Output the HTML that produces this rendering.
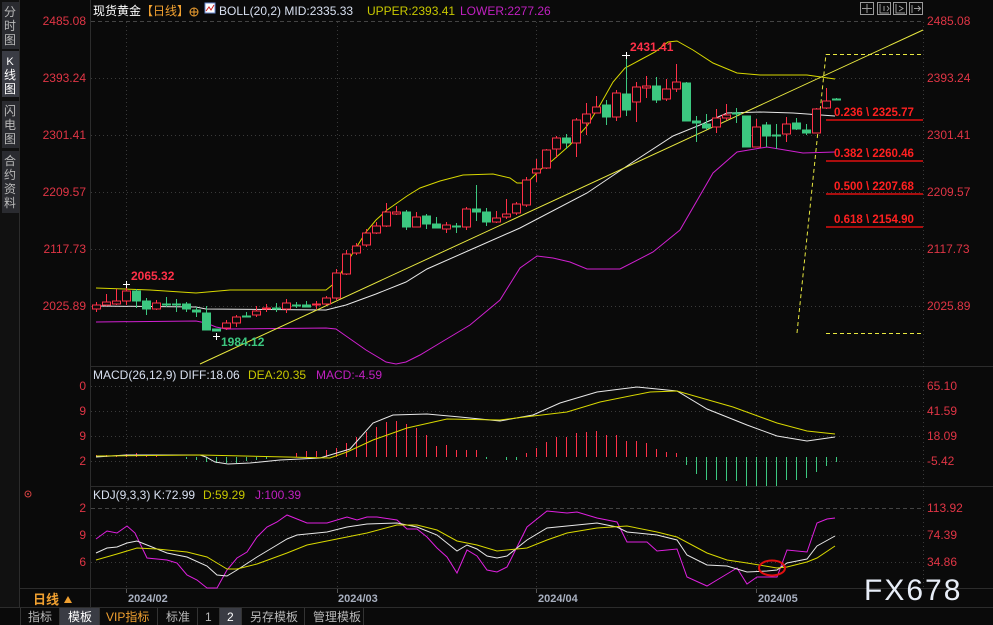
<!DOCTYPE html>
<html><head><meta charset="utf-8"><style>
html,body{margin:0;padding:0;background:#0a0a0a;width:993px;height:625px;overflow:hidden}
svg{display:block}
text{font-family:"Liberation Sans","Noto Sans CJK SC",sans-serif}
</style></head><body>
<svg width="993" height="625" viewBox="0 0 993 625" xmlns="http://www.w3.org/2000/svg">
<rect width="993" height="625" fill="#0a0a0a"/>
<!-- sidebar -->
<rect x="0" y="0" width="19" height="607" fill="#111"/>
<rect x="2" y="2" width="17" height="47" fill="#2a2b30"/>
<rect x="2" y="51" width="17" height="46" fill="#3a3c44"/>
<rect x="2" y="101" width="17" height="47" fill="#2a2b30"/>
<rect x="2" y="151" width="17" height="62" fill="#2a2b30"/>
<g font-size="12" fill="#b8b8b8" text-anchor="middle">
<text x="10" y="16">分</text><text x="10" y="30">时</text><text x="10" y="44">图</text>
<text x="10" y="65" fill="#fff" font-size="11">K</text><text x="10" y="79" fill="#fff">线</text><text x="10" y="93" fill="#fff">图</text>
<text x="10" y="115">闪</text><text x="10" y="129">电</text><text x="10" y="143">图</text>
<text x="10" y="165">合</text><text x="10" y="179">约</text><text x="10" y="193">资</text><text x="10" y="207">料</text>
</g>
<!-- frame lines -->
<g stroke="#2c2c2c" stroke-width="1">
<line x1="19.5" y1="0" x2="19.5" y2="607"/>
<line x1="90.5" y1="0" x2="90.5" y2="607"/>
<line x1="90" y1="366.5" x2="993" y2="366.5"/>
<line x1="90" y1="486.5" x2="993" y2="486.5"/>
<line x1="19" y1="588.5" x2="993" y2="588.5"/>
<line x1="0" y1="607.5" x2="993" y2="607.5"/>
</g>
<!-- grid -->
<g stroke="#3a3a3a" stroke-dasharray="1,3">
<line x1="91" y1="78.5" x2="923" y2="78.5"/><line x1="91" y1="135.5" x2="923" y2="135.5"/>
<line x1="91" y1="192.5" x2="923" y2="192.5"/><line x1="91" y1="249.5" x2="923" y2="249.5"/>
<line x1="91" y1="306.5" x2="923" y2="306.5"/>
<line x1="91" y1="386.5" x2="923" y2="386.5"/><line x1="91" y1="411.5" x2="923" y2="411.5"/>
<line x1="91" y1="436.5" x2="923" y2="436.5"/><line x1="91" y1="461.5" x2="923" y2="461.5"/>
<line x1="91" y1="535.5" x2="923" y2="535.5"/><line x1="91" y1="562.5" x2="923" y2="562.5"/>
<line x1="126.5" y1="22" x2="126.5" y2="588"/><line x1="337.5" y1="22" x2="337.5" y2="588"/>
<line x1="536.5" y1="22" x2="536.5" y2="588"/><line x1="756.5" y1="22" x2="756.5" y2="588"/>
<line x1="923.5" y1="22" x2="923.5" y2="588"/>
</g>
<g stroke="#444" stroke-dasharray="4,3">
<line x1="91" y1="21.5" x2="923" y2="21.5"/><line x1="91" y1="508.5" x2="923" y2="508.5"/>
</g>
<!-- header -->
<text x="93" y="15" font-size="12" fill="#fff">现货黄金</text>
<text x="141" y="15" font-size="12" fill="#f0a030">【日线】</text>
<circle cx="194" cy="12" r="4" fill="none" stroke="#f0a030"/><line x1="190" y1="12" x2="198" y2="12" stroke="#f0a030"/><line x1="194" y1="8" x2="194" y2="16" stroke="#f0a030"/>
<rect x="205" y="3" width="10" height="10" fill="#fff" stroke="#6a8ad0"/><polyline points="206,11 209,7 211,10 214,5" fill="none" stroke="#d02020"/>
<text x="219" y="15" font-size="12" fill="#d8e0f0">BOLL(20,2) MID:2335.33</text>
<text x="367" y="15" font-size="12" fill="#c8c800">UPPER:2393.41</text>
<text x="460" y="15" font-size="12" fill="#c020c0">LOWER:2277.26</text>
<g fill="none" stroke="#9a9a9a"><rect x="860.5" y="2.5" width="13" height="12"/><rect x="877.5" y="2.5" width="13" height="12"/><rect x="893.5" y="2.5" width="13" height="12"/><rect x="909.5" y="2.5" width="13" height="12"/>
<path d="M867 4v9M862 8.5h10M880 4v9h9M884 6v5M887 6l2 2.5-2 2.5M896 4v9h9M899 6l4 2.5-4 2.5M912 5v8M914 8.5h6M918 6l2.5 2.5-2.5 2.5"/></g>
<!-- axis labels -->
<g font-size="12" fill="#e03545">
<text x="86" y="25" text-anchor="end">2485.08</text><text x="86" y="82" text-anchor="end">2393.24</text>
<text x="86" y="139" text-anchor="end">2301.41</text><text x="86" y="196" text-anchor="end">2209.57</text>
<text x="86" y="253" text-anchor="end">2117.73</text><text x="86" y="310" text-anchor="end">2025.89</text>
<text x="86" y="390" text-anchor="end">0</text><text x="86" y="415" text-anchor="end">9</text><text x="86" y="440" text-anchor="end">9</text><text x="86" y="465" text-anchor="end">2</text>
<text x="86" y="512" text-anchor="end">2</text><text x="86" y="539" text-anchor="end">9</text><text x="86" y="566" text-anchor="end">6</text>
<text x="927" y="25">2485.08</text><text x="927" y="82">2393.24</text><text x="927" y="139">2301.41</text>
<text x="927" y="196">2209.57</text><text x="927" y="253">2117.73</text><text x="927" y="310">2025.89</text>
<text x="927" y="390">65.10</text><text x="927" y="415">41.59</text><text x="927" y="440">18.09</text><text x="927" y="465">-5.42</text>
<text x="927" y="512">113.92</text><text x="927" y="539">74.39</text><text x="927" y="566">34.86</text>
</g>
<!-- BOLL -->
<g fill="none" stroke-width="1">
<polyline stroke="#d8d800" points="96,288 150,290 196,293 230,290 326,290 336,282 346,264 356,248 366,232 376,220 387,210 397,203 407,196 420,188 440,181 463,175 493,174 510,178 517,183 527,183 540,170 553,160 570,145 587,126 600,105 613,82 625,68 640,60 655,52 668,42 677,41 693,50 713,63 737,73 760,75 807,75 835,79"/>
<polyline stroke="#e8e8e8" points="96,306 196,307 206,309 326,310 346,305 376,294 406,282 427,269 470,250 520,228 587,193 633,162 673,136 700,125 727,113 760,112 793,113 835,116"/>
<polyline stroke="#d020d0" points="96,322 196,321 206,323 216,327 226,329 326,328 336,329 346,336 366,350 386,362 396,364 406,362 420,355 440,343 470,325 500,300 520,268 537,256 553,258 570,262 587,269 620,269 653,252 680,230 713,173 737,152 767,147 803,153 835,152"/>
<line x1="200" y1="364" x2="923" y2="30" stroke="#e8e840"/>
</g>
<!-- fib -->
<g stroke="#e8e840" stroke-dasharray="4,3" fill="none">
<line x1="797" y1="333" x2="826" y2="54"/><line x1="826" y1="54.5" x2="923" y2="54.5"/><line x1="826" y1="333.5" x2="923" y2="333.5"/>
</g>
<g stroke="#e01010" stroke-width="1.5"><line x1="826" y1="120" x2="923" y2="120"/><line x1="826" y1="161" x2="923" y2="161"/><line x1="826" y1="194" x2="923" y2="194"/><line x1="826" y1="227" x2="923" y2="227"/></g>
<g font-size="11.5" font-weight="bold" fill="#ff2020">
<text x="834" y="116">0.236 \ 2325.77</text><text x="834" y="157">0.382 \ 2260.46</text>
<text x="834" y="190">0.500 \ 2207.68</text><text x="834" y="223">0.618 \ 2154.90</text>
</g>
<!-- candles -->
<g id="c" stroke-width="1">
<g stroke="#ff3048" fill="#0a0a0a">
<line x1="96.5" y1="302" x2="96.5" y2="312"/><rect x="92.5" y="305" width="8" height="4"/>
<line x1="106.5" y1="294" x2="106.5" y2="306"/><rect x="102.5" y="302" width="8" height="3"/>
<line x1="116.5" y1="289" x2="116.5" y2="305"/><rect x="112.5" y="301" width="8" height="3"/>
<line x1="126.5" y1="284" x2="126.5" y2="305"/><rect x="122.5" y="291" width="8" height="10"/>
<line x1="156.5" y1="300" x2="156.5" y2="310"/><rect x="152.5" y="303" width="8" height="6"/>
<line x1="226.5" y1="320" x2="226.5" y2="330"/><rect x="222.5" y="323" width="8" height="5"/>
<line x1="236.5" y1="315" x2="236.5" y2="327"/><rect x="232.5" y="317" width="8" height="6"/>
<line x1="256.5" y1="306" x2="256.5" y2="317"/><rect x="252.5" y="311" width="8" height="4"/>
<line x1="266.5" y1="304" x2="266.5" y2="312"/><rect x="262.5" y="308" width="8" height="1"/>
<line x1="286.5" y1="299" x2="286.5" y2="313"/><rect x="282.5" y="303" width="8" height="6"/>
<line x1="316.5" y1="301" x2="316.5" y2="309"/><rect x="312.5" y="304" width="8" height="1"/>
<line x1="326.5" y1="296" x2="326.5" y2="305"/><rect x="322.5" y="298" width="8" height="6"/>
<line x1="336.5" y1="269" x2="336.5" y2="300"/><rect x="332.5" y="273" width="8" height="25"/>
<line x1="346.5" y1="250" x2="346.5" y2="275"/><rect x="342.5" y="254" width="8" height="20"/>
<line x1="356.5" y1="243" x2="356.5" y2="255"/><rect x="352.5" y="246" width="8" height="7"/>
<line x1="366.5" y1="229" x2="366.5" y2="247"/><rect x="362.5" y="233" width="8" height="12"/>
<line x1="376.5" y1="222" x2="376.5" y2="234"/><rect x="372.5" y="226" width="8" height="7"/>
<line x1="386.5" y1="203" x2="386.5" y2="227"/><rect x="382.5" y="212" width="8" height="14"/>
<line x1="396.5" y1="206" x2="396.5" y2="215"/><rect x="392.5" y="212" width="8" height="2"/>
<line x1="416.5" y1="212" x2="416.5" y2="227"/><rect x="412.5" y="217" width="8" height="10"/>
<line x1="446.5" y1="222" x2="446.5" y2="233"/><rect x="442.5" y="225" width="8" height="4"/>
<line x1="466.5" y1="207" x2="466.5" y2="230"/><rect x="462.5" y="209" width="8" height="18"/>
<line x1="496.5" y1="211" x2="496.5" y2="223"/><rect x="492.5" y="218" width="8" height="4"/>
<line x1="506.5" y1="199" x2="506.5" y2="219"/><rect x="502.5" y="214" width="8" height="3"/>
<line x1="516.5" y1="202" x2="516.5" y2="215"/><rect x="512.5" y="204" width="8" height="9"/>
<line x1="526.5" y1="177" x2="526.5" y2="207"/><rect x="522.5" y="180" width="8" height="25"/>
<line x1="536.5" y1="159" x2="536.5" y2="182"/><rect x="532.5" y="169" width="8" height="4"/>
<line x1="546.5" y1="149" x2="546.5" y2="169"/><rect x="542.5" y="150" width="8" height="18"/>
<line x1="556.5" y1="136" x2="556.5" y2="158"/><rect x="552.5" y="138" width="8" height="11"/>
<line x1="576.5" y1="118" x2="576.5" y2="157"/><rect x="572.5" y="120" width="8" height="23"/>
<line x1="586.5" y1="103" x2="586.5" y2="135"/><rect x="582.5" y="114" width="8" height="9"/>
<line x1="596.5" y1="96" x2="596.5" y2="113"/><rect x="592.5" y="107" width="8" height="6"/>
<line x1="616.5" y1="90" x2="616.5" y2="121"/><rect x="612.5" y="93" width="8" height="24"/>
<line x1="636.5" y1="82" x2="636.5" y2="122"/><rect x="632.5" y="87" width="8" height="15"/>
<line x1="646.5" y1="76" x2="646.5" y2="98"/><rect x="642.5" y="86" width="8" height="2"/>
<line x1="666.5" y1="79" x2="666.5" y2="101"/><rect x="662.5" y="89" width="8" height="10"/>
<line x1="676.5" y1="64" x2="676.5" y2="92"/><rect x="672.5" y="82" width="8" height="7"/>
<line x1="716.5" y1="109" x2="716.5" y2="133"/><rect x="712.5" y="118" width="8" height="9"/>
<line x1="726.5" y1="104" x2="726.5" y2="120"/><rect x="722.5" y="115" width="8" height="3"/>
<line x1="756.5" y1="119" x2="756.5" y2="147"/><rect x="752.5" y="127" width="8" height="20"/>
<line x1="786.5" y1="117" x2="786.5" y2="142"/><rect x="782.5" y="124" width="8" height="10"/>
<line x1="816.5" y1="108" x2="816.5" y2="133"/><rect x="812.5" y="109" width="8" height="24"/>
<line x1="826.5" y1="88" x2="826.5" y2="109"/><rect x="822.5" y="101" width="8" height="7"/>
</g>
<g stroke="#3cc880" fill="#3cc880">
<line x1="136.5" y1="289" x2="136.5" y2="308"/><rect x="132.5" y="291" width="8" height="10"/>
<line x1="146.5" y1="298" x2="146.5" y2="315"/><rect x="142.5" y="301" width="8" height="8"/>
<line x1="166.5" y1="297" x2="166.5" y2="307"/><rect x="162.5" y="304" width="8" height="1"/>
<line x1="176.5" y1="299" x2="176.5" y2="312"/><rect x="172.5" y="304" width="8" height="1"/>
<line x1="186.5" y1="302" x2="186.5" y2="312"/><rect x="182.5" y="304" width="8" height="5"/>
<line x1="196.5" y1="307" x2="196.5" y2="317"/><rect x="192.5" y="310" width="8" height="2"/>
<line x1="206.5" y1="306" x2="206.5" y2="330"/><rect x="202.5" y="313" width="8" height="17"/>
<line x1="216.5" y1="329" x2="216.5" y2="331"/><rect x="212.5" y="329" width="8" height="2"/>
<line x1="246.5" y1="312" x2="246.5" y2="317"/><rect x="242.5" y="316" width="8" height="1"/>
<line x1="276.5" y1="303" x2="276.5" y2="312"/><rect x="272.5" y="308" width="8" height="1"/>
<line x1="296.5" y1="302" x2="296.5" y2="308"/><rect x="292.5" y="305" width="8" height="1"/>
<line x1="306.5" y1="301" x2="306.5" y2="307"/><rect x="302.5" y="305" width="8" height="2"/>
<line x1="406.5" y1="210" x2="406.5" y2="230"/><rect x="402.5" y="212" width="8" height="15"/>
<line x1="426.5" y1="214" x2="426.5" y2="229"/><rect x="422.5" y="216" width="8" height="8"/>
<line x1="436.5" y1="217" x2="436.5" y2="228"/><rect x="432.5" y="224" width="8" height="4"/>
<line x1="456.5" y1="223" x2="456.5" y2="233"/><rect x="452.5" y="226" width="8" height="1"/>
<line x1="476.5" y1="185" x2="476.5" y2="221"/><rect x="472.5" y="209" width="8" height="3"/>
<line x1="486.5" y1="208" x2="486.5" y2="226"/><rect x="482.5" y="212" width="8" height="10"/>
<line x1="566.5" y1="134" x2="566.5" y2="149"/><rect x="562.5" y="138" width="8" height="5"/>
<line x1="606.5" y1="100" x2="606.5" y2="125"/><rect x="602.5" y="105" width="8" height="12"/>
<line x1="626.5" y1="55" x2="626.5" y2="116"/><rect x="622.5" y="94" width="8" height="16"/>
<line x1="656.5" y1="77" x2="656.5" y2="103"/><rect x="652.5" y="86" width="8" height="14"/>
<line x1="686.5" y1="82" x2="686.5" y2="121"/><rect x="682.5" y="83" width="8" height="38"/>
<line x1="696.5" y1="116" x2="696.5" y2="142"/><rect x="692.5" y="121" width="8" height="2"/>
<line x1="706.5" y1="114" x2="706.5" y2="130"/><rect x="702.5" y="124" width="8" height="4"/>
<line x1="736.5" y1="108" x2="736.5" y2="123"/><rect x="732.5" y="113" width="8" height="1"/>
<line x1="746.5" y1="116" x2="746.5" y2="147"/><rect x="742.5" y="116" width="8" height="31"/>
<line x1="766.5" y1="122" x2="766.5" y2="147"/><rect x="762.5" y="125" width="8" height="11"/>
<line x1="776.5" y1="124" x2="776.5" y2="149"/><rect x="772.5" y="135" width="8" height="1"/>
<line x1="796.5" y1="118" x2="796.5" y2="130"/><rect x="792.5" y="123" width="8" height="6"/>
<line x1="806.5" y1="124" x2="806.5" y2="135"/><rect x="802.5" y="130" width="8" height="3"/>
<line x1="836.5" y1="98" x2="836.5" y2="100"/><rect x="832.5" y="99" width="8" height="1"/>
</g>
</g>
<!-- hi/lo marks -->
<g stroke="#fff"><path d="M123 284.5h7M126.5 281v7M213 336.5h7M216.5 333v7M622 55.5h8M626.5 52v7"/></g>
<g font-size="12" font-weight="bold">
<text x="131" y="280" fill="#ff3048">2065.32</text>
<text x="221" y="346" fill="#3cc880">1984.12</text>
<text x="630" y="51" fill="#ff3048">2431.41</text>
</g>
<!-- MACD -->
<text x="93" y="379" font-size="12" fill="#d8e0f0">MACD(26,12,9) DIFF:18.06</text>
<text x="248" y="379" font-size="12" fill="#c8c800">DEA:20.35</text>
<text x="316" y="379" font-size="12" fill="#c020c0">MACD:-4.59</text>
<g stroke="#ff3048">
<path d="M96.5 457v-2M106.5 457v-2M116.5 457v-2M126.5 457v-3M136.5 457v-4M146.5 457v-2M156.5 457v-2M296.5 457v-4M306.5 457v-6M316.5 457v-6M326.5 457v-7M336.5 457v-9M346.5 457v-14M356.5 457v-20M366.5 457v-25M376.5 457v-30M386.5 457v-35M396.5 457v-36M406.5 457v-33M416.5 457v-29M426.5 457v-22M436.5 457v-11M446.5 457v-12M456.5 457v-7M466.5 457v-7M476.5 457v-7M526.5 457v-4M536.5 457v-9M546.5 457v-15M556.5 457v-20M566.5 457v-20M576.5 457v-24M586.5 457v-25M596.5 457v-26M606.5 457v-22M616.5 457v-22M626.5 457v-16M636.5 457v-16M646.5 457v-14M656.5 457v-8M666.5 457v-5M676.5 457v-4"/>
</g>
<g stroke="#3cc880">
<path d="M186.5 457v2M196.5 457v3M206.5 457v5M216.5 457v6M226.5 457v6M236.5 457v6M246.5 457v4M256.5 457v3M266.5 457v2M486.5 457v2M506.5 457v3M516.5 457v3M686.5 457v8M696.5 457v17M706.5 457v23M716.5 457v23M726.5 457v24M736.5 457v24M746.5 457v29M756.5 457v29M766.5 457v29M776.5 457v29M786.5 457v23M796.5 457v23M806.5 457v21M816.5 457v15M826.5 457v9M836.5 457v5"/>
</g>
<g fill="none">
<polyline stroke="#e8e8e8" points="96,457 126,455 200,455 206,457 215,462 228,464 250,463 280,460 320,458 330,455 350,449 373,423 393,415 427,414 460,417 500,421 533,415 560,403 597,392 637,387 677,391 707,409 747,425 777,436 807,441 835,437"/>
<polyline stroke="#d8d800" points="96,456 200,455 330,458 347,452 373,440 407,428 447,419 500,420 567,412 600,402 650,392 677,391 733,407 777,423 807,431 835,434"/>
</g>
<!-- KDJ -->
<circle cx="28" cy="494" r="3" fill="none" stroke="#d04040"/><circle cx="28" cy="494" r="1" fill="#d04040"/>
<text x="93" y="499" font-size="12" fill="#d8e0f0">KDJ(9,3,3) K:72.99</text>
<text x="203" y="499" font-size="12" fill="#c8c800">D:59.29</text>
<text x="255" y="499" font-size="12" fill="#c020c0">J:100.39</text>
<g fill="none">
<polyline stroke="#e020e0" points="96,539 107,531 117,533 127,526 135,533 147,558 167,560 177,563 187,575 197,580 207,588 217,588 227,570 237,558 247,552 257,537 267,527 277,522 287,515 307,523 327,523 347,517 357,520 367,517 377,517 397,520 407,529 417,529 427,537 437,548 447,557 457,573 467,550 477,556 487,570 497,572 507,567 527,527 547,511 567,513 577,512 597,518 617,522 627,542 647,542 657,551 677,549 687,577 707,586 717,580 737,568 747,584 757,577 777,577 787,550 807,552 817,523 827,519 835,518"/>
<polyline stroke="#e8e8e8" points="96,553 107,548 117,547 127,543 137,541 147,545 167,553 187,557 207,566 217,575 227,576 237,570 257,557 277,545 287,539 297,535 327,532 347,527 367,524 397,523 417,527 437,535 457,551 467,545 477,549 487,556 497,558 507,556 527,540 547,528 567,526 597,523 617,527 627,532 657,535 677,540 687,555 707,565 727,566 747,572 767,571 777,570 787,563 807,559 817,546 835,536"/>
<polyline stroke="#d8d800" points="96,560 117,554 137,548 157,549 187,552 207,557 217,563 227,569 237,569 257,564 287,553 307,545 337,539 367,533 397,525 417,525 437,530 457,541 477,545 497,551 527,548 547,540 567,533 597,528 627,526 657,532 677,537 707,553 727,560 747,563 777,568 787,567 807,562 817,558 835,546"/>
</g>
<ellipse cx="772" cy="568" rx="13" ry="7.5" fill="none" stroke="#e01010" stroke-width="2"/>
<!-- time axis -->
<g font-size="11" font-weight="bold" fill="#a8b0c0">
<text x="128" y="602">2024/02</text><text x="338" y="602">2024/03</text>
<text x="538" y="602">2024/04</text><text x="758" y="602">2024/05</text>
</g>
<g stroke="#555"><path d="M126.5 589v4M337.5 589v4M536.5 589v4M756.5 589v4"/></g>
<text x="33" y="604" font-size="13" font-weight="bold" fill="#f0a030">日线</text>
<path d="M64 603l4-7 4 7z" fill="#f0a030"/>
<text x="864" y="600" font-size="30" fill="#e8eef8" letter-spacing="2">FX678</text>
<!-- bottom tabs -->
<rect x="0" y="608" width="993" height="17" fill="#0a0a0a"/>
<rect x="60" y="608" width="39" height="17" fill="#3a3c44"/>
<rect x="220" y="608" width="21" height="17" fill="#3a3c44"/>
<g stroke="#333"><path d="M20.5 608v17M59.5 608v17M99.5 608v17M157.5 608v17M197.5 608v17M219.5 608v17M241.5 608v17M304.5 608v17M363.5 608v17"/></g>
<g font-size="12" fill="#b8b8b8">
<text x="28" y="621">指标</text><text x="68" y="621" fill="#fff">模板</text>
<text x="106" y="621" fill="#f0a030">VIP指标</text><text x="166" y="621">标准</text>
<text x="205" y="621">1</text><text x="227" y="621" fill="#fff">2</text>
<text x="250" y="621">另存模板</text><text x="313" y="621">管理模板</text>
</g>
</svg>
</body></html>
